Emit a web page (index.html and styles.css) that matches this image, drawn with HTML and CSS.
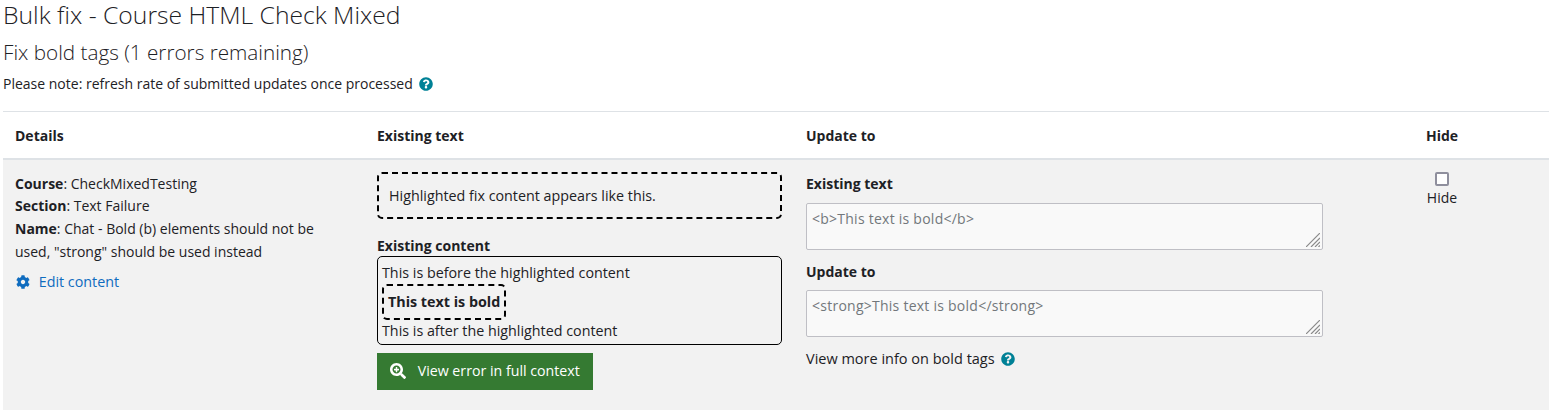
FILE: index.html
```html
<!DOCTYPE html>
<html lang="en">
<head>
    <meta charset="UTF-8">
    <title>Bulk fix - Course HTML Check Mixed</title>
    <link rel="stylesheet" href="styles.css">
</head>
<body>
    <h1 class="page-title">Bulk fix - Course HTML Check Mixed</h1>
    <h2 class="sub-title">Fix bold tags (1 errors remaining)</h2>
    <p class="note">Please note: refresh rate of submitted updates once processed
        <svg class="help-icon" viewBox="0 0 512 512"><path d="M504 256c0 137-111 248-248 248S8 393 8 256 119 8 256 8s248 111 248 248zM263 90c-55 0-89 23-116 64-4 5-3 12 3 16l35 26c5 4 13 3 17-2 18-23 30-36 57-36 20 0 45 13 45 33 0 15-12 22-32 33-23 13-54 30-54 71v4c0 7 5 12 12 12h56c7 0 12-5 12-12v-1c0-29 83-30 83-106 0-57-59-100-118-100zm-7 243c-25 0-46 21-46 46s21 46 46 46 46-21 46-46-21-46-46-46z"/></svg>
    </p>

    <table class="fix-table">
        <thead>
            <tr>
                <th class="col-details">Details</th>
                <th class="col-existing">Existing text</th>
                <th class="col-update">Update to</th>
                <th class="col-hide">Hide</th>
            </tr>
        </thead>
        <tbody>
            <tr>
                <td>
                    <div class="details">
                        <strong>Course</strong>: CheckMixedTesting<br>
                        <strong>Section</strong>: Text Failure<br>
                        <strong>Name</strong>: Chat - Bold (b) elements should not be used, "strong" should be used instead
                    </div>
                    <a class="edit-link" href="#">
                        <svg class="gear-icon" viewBox="0 0 512 512"><path d="M487 316l-42-25c4-23 4-47 0-70l42-25c5-3 7-9 6-14-11-36-30-68-55-95-4-4-10-5-15-2l-42 25c-18-15-39-27-61-35V26c0-6-4-11-9-12-37-8-75-8-110 0-6 1-10 6-10 12v49c-22 8-43 20-61 35L88 86c-5-3-11-2-15 2-25 27-44 59-55 95-2 5 1 11 6 14l42 25c-4 23-4 47 0 70l-42 25c-5 3-8 9-6 14 11 36 30 68 55 95 4 4 10 5 15 2l42-25c18 15 39 27 61 35v49c0 6 4 11 10 12 37 8 75 8 110 0 5-1 9-6 9-12v-49c22-8 43-20 61-35l42 25c5 3 11 2 15-2 25-27 44-59 55-95 1-5-1-11-6-14zM256 336c-44 0-80-36-80-80s36-80 80-80 80 36 80 80-36 80-80 80z"/></svg>
                        Edit content
                    </a>
                </td>
                <td>
                    <div class="highlight-box">Highlighted fix content appears like this.</div>
                    <div class="field-label">Existing content</div>
                    <div class="content-box">
                        <div>This is before the highlighted content</div>
                        <div class="inline-highlight"><strong>This text is bold</strong></div>
                        <div>This is after the highlighted content</div>
                    </div>
                    <button class="btn-context">
                        <svg class="zoom-icon" viewBox="0 0 512 512"><path fill-rule="evenodd" d="M505 443l-100-100c-4-4-10-7-17-7h-16c28-35 44-80 44-128C416 93 323 0 208 0S0 93 0 208s93 208 208 208c48 0 93-16 128-44v16c0 7 3 13 7 17l100 100c9 9 25 9 34 0l28-28c9-10 9-25 0-34zM208 336c-71 0-128-57-128-128S137 80 208 80s128 57 128 128-57 128-128 128z"/><path d="M288 192v32c0 7-5 12-12 12h-44v44c0 7-5 12-12 12h-24c-7 0-12-5-12-12v-44h-44c-7 0-12-5-12-12v-32c0-7 5-12 12-12h44v-44c0-7 5-12 12-12h24c7 0 12 5 12 12v44h44c7 0 12 5 12 12z"/></svg>
                        View error in full context
                    </button>
                </td>
                <td>
                    <div class="update-label">Existing text</div>
                    <div class="code-wrap">
                        <textarea class="code-input" readonly>&lt;b&gt;This text is bold&lt;/b&gt;</textarea>
                        <svg class="grip" viewBox="0 0 14 14"><path d="M0 14L14 0M5 14L14 5M9 14L14 9M12.5 14L14 12.5"/></svg>
                    </div>
                    <div class="update-label second">Update to</div>
                    <div class="code-wrap">
                        <textarea class="code-input" readonly>&lt;strong&gt;This text is bold&lt;/strong&gt;</textarea>
                        <svg class="grip" viewBox="0 0 14 14"><path d="M0 14L14 0M5 14L14 5M9 14L14 9M12.5 14L14 12.5"/></svg>
                    </div>
                    <p class="more-info">View more info on bold tags
                        <svg class="help-icon" viewBox="0 0 512 512"><path d="M504 256c0 137-111 248-248 248S8 393 8 256 119 8 256 8s248 111 248 248zM263 90c-55 0-89 23-116 64-4 5-3 12 3 16l35 26c5 4 13 3 17-2 18-23 30-36 57-36 20 0 45 13 45 33 0 15-12 22-32 33-23 13-54 30-54 71v4c0 7 5 12 12 12h56c7 0 12-5 12-12v-1c0-29 83-30 83-106 0-57-59-100-118-100zm-7 243c-25 0-46 21-46 46s21 46 46 46 46-21 46-46-21-46-46-46z"/></svg>
                    </p>
                </td>
                <td class="hide-cell">
                    <input class="hide-check" type="checkbox" id="hide-1">
                    <label for="hide-1">Hide</label>
                </td>
            </tr>
        </tbody>
    </table>
</body>
</html>
```

FILE: styles.css
```css
* {
    box-sizing: border-box;
}

body {
    margin: 0;
    padding: 0 5px 0 3px;
    font-family: "Open Sans", sans-serif;
    font-size: 14px;
    line-height: 22.8px;
    color: #1d2125;
    background: #fff;
    overflow: hidden;
}

.page-title {
    margin: 0;
    font-size: 24.7px;
    font-weight: 300;
    line-height: 30px;
}

.sub-title {
    margin: 7px 0 0;
    font-size: 20.7px;
    font-weight: 300;
    line-height: 30px;
}

.note {
    margin: 6px 0 0;
    height: 38px;
}

.help-icon {
    width: 14px;
    height: 14px;
    margin-left: 3px;
    vertical-align: -2px;
    fill: #008196;
}

.fix-table {
    width: 1546px;
    table-layout: fixed;
    border-collapse: collapse;
}

.fix-table th {
    height: 47px;
    padding: 4px 12px 0;
    text-align: left;
    font-weight: 700;
    border-top: 1px solid #dee2e6;
    border-bottom: 2px solid #dee2e6;
}

.fix-table td {
    height: 251px;
    padding: 12px;
    vertical-align: top;
    background: #f2f2f2;
}

.col-details {
    width: 362px;
}

.col-existing {
    width: 429px;
}

.col-update {
    width: 608px;
}

.fix-table .col-hide {
    text-align: center;
    padding-right: 79px;
}

.details {
    max-width: 320px;
    margin-top: 1px;
}

.edit-link {
    display: block;
    margin-top: 7px;
    font-size: 14.3px;
    color: #0f6cbf;
    text-decoration: none;
}

.gear-icon {
    width: 14px;
    height: 14px;
    margin-left: 1px;
    margin-right: 5px;
    vertical-align: -2px;
    fill: #0f6cbf;
}

.highlight-box {
    height: 47px;
    padding: 11px 10px 0;
    border: 2px dashed #000;
    border-radius: 5px;
    font-size: 14.3px;
}

.field-label {
    margin-top: 17px;
    font-weight: 700;
    line-height: 20px;
}

.content-box {
    height: 89px;
    padding: 5px 4px 2px;
    border: 1px solid #000;
    border-radius: 5px;
    font-size: 14.3px;
}

.inline-highlight {
    display: table;
    border-collapse: separate;
    border-spacing: 0;
    padding: 4.6px 4px;
    border: 2px dashed #000;
    border-radius: 5px;
}

.btn-context {
    display: block;
    width: 216px;
    height: 37px;
    margin-top: 8px;
    padding: 0 0 0 13px;
    border: 0;
    text-align: left;
    font: inherit;
    font-size: 14.2px;
    color: #fff;
    background: #357a32;
}

.zoom-icon {
    width: 16px;
    height: 16px;
    margin-right: 8px;
    vertical-align: -3px;
    fill: #fff;
}

.update-label {
    font-weight: 700;
    line-height: 22px;
    margin-top: 1px;
}

.update-label.second {
    margin-top: 11px;
    line-height: 21px;
}

.code-wrap {
    position: relative;
    width: 517px;
    margin-top: 8px;
}

.code-input {
    display: block;
    width: 100%;
    height: 47px;
    padding: 4px 5px;
    border: 1px solid #bfbfc5;
    border-radius: 2px;
    font: inherit;
    letter-spacing: 0.25px;
    line-height: 22px;
    color: #72777b;
    background: #f9f9f9;
    resize: none;
}

.grip {
    position: absolute;
    right: 3px;
    bottom: 3px;
    width: 14px;
    height: 14px;
    fill: none;
    stroke: #8a8a8a;
    stroke-width: 1.2;
}

.more-info {
    margin: 11px 0 0;
    font-size: 14.5px;
}

.fix-table .hide-cell {
    text-align: center;
    padding-right: 79px;
}

.hide-check {
    display: block;
    width: 14px;
    height: 14px;
    margin: 0 auto 1px;
    appearance: none;
    background: #fff;
    border: 2px solid #8f8f9d;
    border-radius: 2px;
}
```
